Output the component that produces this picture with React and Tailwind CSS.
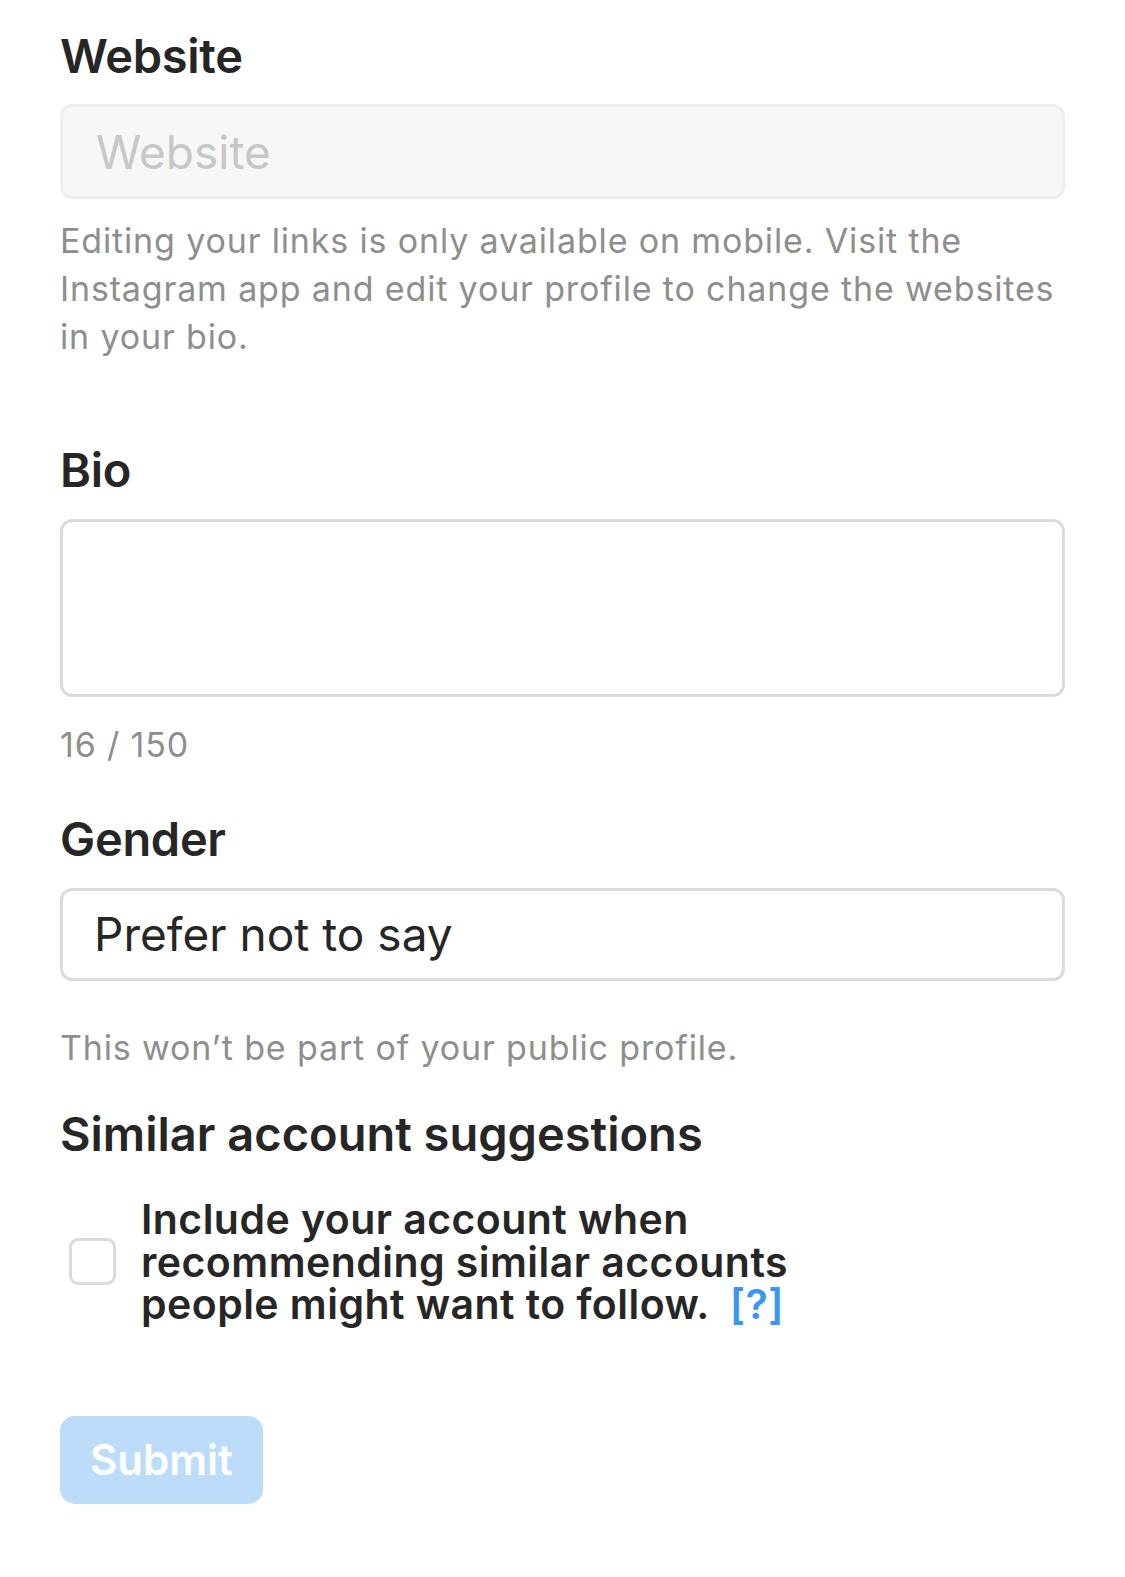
import React, { useState } from 'react';

const font = { fontFamily: 'Inter, "Noto Sans", sans-serif' };

function Label({ children, className = '' }) {
  return (
    <p className={`text-[47px] font-semibold leading-[56px] text-[#262626] ${className || 'tracking-[-0.3px]'}`}>{children}</p>
  );
}

function Hint({ children, className = '' }) {
  return <p className={`text-[34px] leading-[48px] tracking-[0.85px] text-[#8e8e8e] ${className}`}>{children}</p>;
}

export default function App() {
  const [bio, setBio] = useState('');
  const [similar, setSimilar] = useState(false);

  return (
    <div className="min-h-[1577px] bg-white px-[60px] pt-[28px]" style={font}>
      <Label className="tracking-[-0.3px]">Website</Label>
      <input
        type="text"
        disabled
        placeholder="Website"
        className="mt-[20px] block h-[95px] w-full rounded-[12px] border-[3px] border-[#efefef] bg-[#f7f7f7] px-[33px] text-[46px] text-[#262626] outline-none placeholder:text-[#c7c7c7]"
      />
      <Hint className="mt-[18px]">
        Editing your links is only available on mobile. Visit the Instagram app and edit your profile to change the
        websites in your bio.
      </Hint>

      <Label className="mt-[81px] tracking-[-0.3px]">Bio</Label>
      <textarea
        value={bio}
        onChange={(e) => setBio(e.target.value)}
        className="mt-[21px] block h-[178px] w-full resize-none rounded-[12px] border-[3px] border-[#dbdbdb] bg-white px-[33px] py-[20px] text-[46px] text-[#262626] outline-none"
      />
      <Hint className="mt-[24px]">16 / 150</Hint>

      <Label className="mt-[42px] tracking-[-0.3px]">Gender</Label>
      <div className="mt-[21px] flex h-[93px] items-center rounded-[12px] border-[3px] border-[#dbdbdb] bg-white px-[31px] text-[46px] text-[#262626]">
        Prefer not to say
      </div>
      <Hint className="mt-[43px]">This won’t be part of your public profile.</Hint>

      <Label className="mt-[34px] tracking-[0px]">Similar account suggestions</Label>
      <label className="mt-[36px] flex cursor-pointer items-center">
        <input
          type="checkbox"
          checked={similar}
          onChange={(e) => setSimilar(e.target.checked)}
          className="ml-[9px] h-[47px] w-[47px] shrink-0 cursor-pointer appearance-none rounded-[9px] border-[3px] border-[#dbdbdb] bg-white"
        />
        <span className="ml-[25px] text-[41px] font-semibold leading-[42.5px] tracking-[0.45px] text-[#262626]">
          Include your account when
          <br />
          recommending similar accounts
          <br />
          people might want to follow.
          <a href="#" className="ml-[20px] text-[#3897f0]">
            [?]
          </a>
        </span>
      </label>

      <button
        type="button"
        disabled
        className="mt-[90px] flex h-[88px] w-[203px] items-center justify-center rounded-[15px] bg-[#bcdcf9] text-[42px] font-semibold text-white"
      >
        Submit
      </button>
    </div>
  );
}
